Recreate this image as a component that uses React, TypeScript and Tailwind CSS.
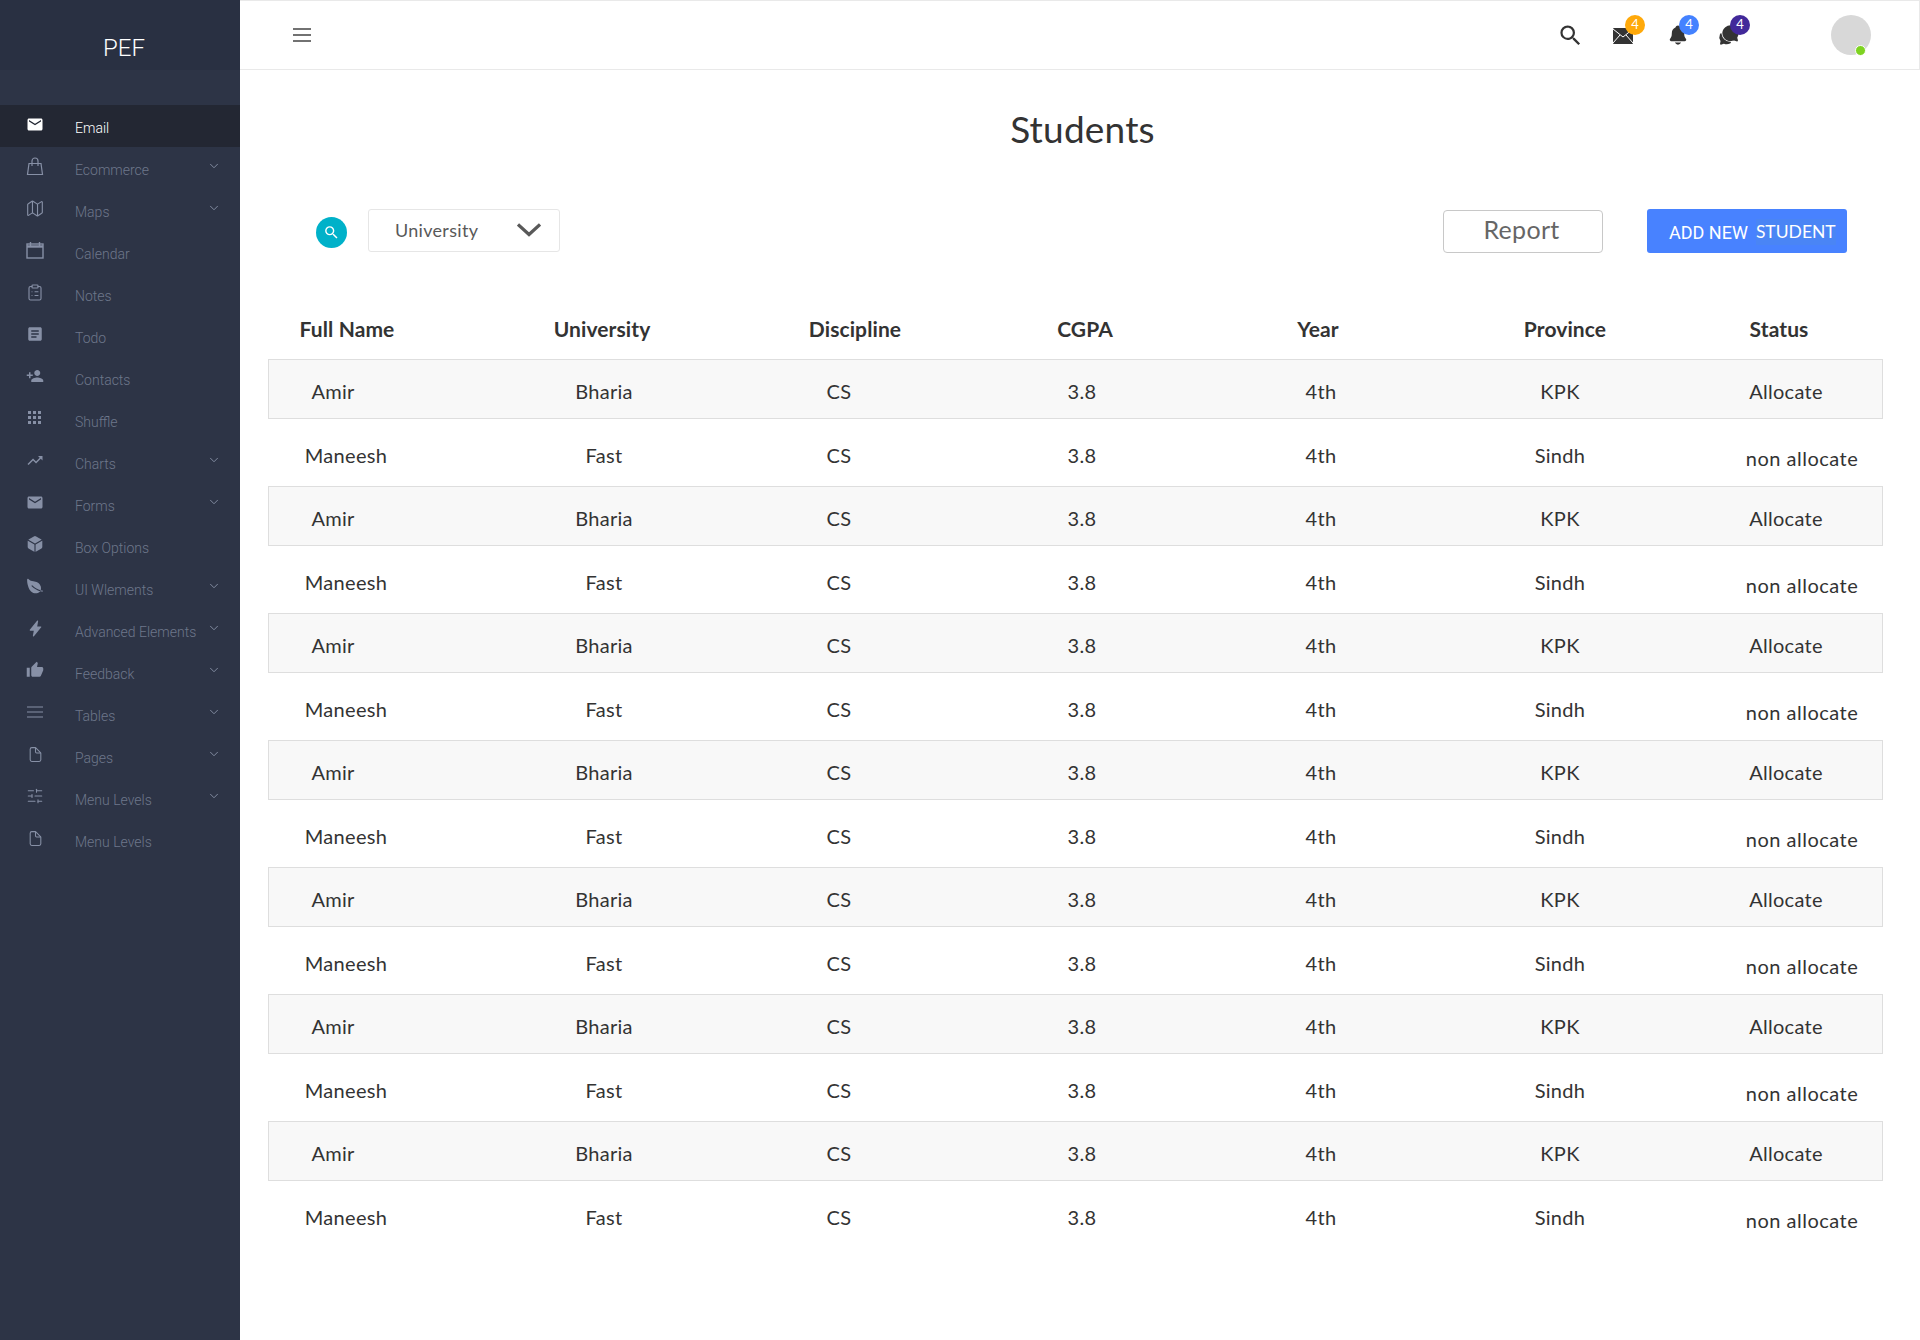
import React from "react";
import { MdEmail, MdArticle, MdPersonAdd, MdTrendingUp, MdThumbUp, MdSearch } from "react-icons/md";
import { IoMapOutline, IoCube, IoLeaf, IoFlash, IoDocumentOutline, IoNotifications, IoChatbubbles } from "react-icons/io5";
import { ClipboardList, SlidersHorizontal, ChevronDown } from "lucide-react";

const Bag = () => (
  <svg width="18" height="20" viewBox="0 0 18 20" fill="none" stroke="currentColor" strokeWidth="1.2">
    <path d="M3 7.5h12l1.5 11h-15z" />
    <path d="M6 10V5a3 3 0 0 1 6 0v5" />
  </svg>
);
const Cal = () => (
  <svg width="18" height="18" viewBox="0 0 18 18" fill="none" stroke="currentColor" strokeWidth="1.4">
    <rect x="1" y="3" width="16" height="14" />
    <path d="M1 5.5h16" strokeWidth="2.4" />
    <path d="M4.5 1v4M13.5 1v4" />
  </svg>
);
const Dots = () => (
  <svg width="14" height="14" viewBox="0 0 14 14" fill="currentColor">
    {[0, 5, 10].map((y) => [0, 5, 10].map((x) => <rect key={`${x}-${y}`} x={x} y={y} width="3" height="3" />))}
  </svg>
);
const Lines = () => (
  <svg width="16" height="12" viewBox="0 0 16 12" stroke="currentColor" strokeWidth="1.2">
    <path d="M0 1h16M0 6h16M0 11h16" />
  </svg>
);

const nav = [
  { label: "Email", icon: <MdEmail size={21} />, active: true },
  { label: "Ecommerce", icon: <Bag />, more: true },
  { label: "Maps", icon: <IoMapOutline size={21} />, more: true },
  { label: "Calendar", icon: <Cal /> },
  { label: "Notes", icon: <ClipboardList size={19} strokeWidth={1.5} /> },
  { label: "Todo", icon: <MdArticle size={20} /> },
  { label: "Contacts", icon: <MdPersonAdd size={22} /> },
  { label: "Shuffle", icon: <Dots /> },
  { label: "Charts", icon: <MdTrendingUp size={21} />, more: true },
  { label: "Forms", icon: <MdEmail size={21} />, more: true },
  { label: "Box Options", icon: <IoCube size={18} /> },
  { label: "UI Wlements", icon: <IoLeaf size={18} />, more: true },
  { label: "Advanced Elements", icon: <IoFlash size={17} />, more: true },
  { label: "Feedback", icon: <MdThumbUp size={18} />, more: true },
  { label: "Tables", icon: <Lines />, more: true },
  { label: "Pages", icon: <IoDocumentOutline size={17} />, more: true },
  { label: "Menu Levels", icon: <SlidersHorizontal size={18} strokeWidth={1.4} />, more: true },
  { label: "Menu Levels", icon: <IoDocumentOutline size={17} /> },
];

const MailIcon = () => (
  <svg width="20" height="16" viewBox="0 0 20 16">
    <rect x="0" y="0" width="20" height="16" rx="1" fill="#333" />
    <path d="M0 1l10 8 10-8M0 15l7-8M20 15l-7-8" stroke="#fff" strokeWidth="1" fill="none" />
  </svg>
);

const Badge = ({ color }: { color: string }) => (
  <span className={`absolute left-[12px] flex h-[20px] w-[20px] items-center justify-center rounded-full text-[13px] text-white ${color}`}>4</span>
);

const AmirRow = () => (
  <div className="mb-[1px] grid h-[60px] grid-cols-[271px_235px_243px_239px_239px_226px_120px] items-center border border-[#dedede] bg-[#f8f8f8] pt-[3px] pl-[4px]">
    {["Amir", "Bharia", "CS", "3.8", "4th", "KPK", "Allocate"].map((t) => (
      <div key={t} className="w-[120px] text-center">{t}</div>
    ))}
  </div>
);
const ManeeshRow = () => (
  <div className="grid h-[66px] grid-cols-[258px_235px_243px_239px_239px_242px_120px] items-center pt-[3px] pl-[18px]">
    {["Maneesh", "Fast", "CS", "3.8", "4th", "Sindh"].map((t) => (
      <div key={t} className="w-[120px] text-center">{t}</div>
    ))}
    <div className="mt-[6px] w-[120px] text-center tracking-[0.5px] whitespace-nowrap">non allocate</div>
  </div>
);

export default function App() {
  return (
    <div className="flex h-[1340px] overflow-hidden bg-white font-['Lato',sans-serif] text-[#333]">
      <aside className="w-[240px] shrink-0 bg-[#2d3446] font-['Roboto',sans-serif] text-[14px] font-light">
        <div className="flex h-[70px] items-center justify-center bg-[#293042] pt-[26px] pl-[8px] text-[24px] text-white">PEF</div>
        <nav className="pt-[35px]">
          {nav.map((n, i) => (
            <div key={i} className={`flex h-[42px] items-center pl-[26px] ${n.active ? "bg-[#232733] text-white" : "text-[#6e778b]"}`}>
              <span className={`mb-[4px] flex w-[18px] justify-center ${n.active ? "text-white" : "text-[#8790a6]"}`}>{n.icon}</span>
              <span className="mt-[4px] ml-[31px] flex-1 whitespace-nowrap">{n.label}</span>
              {n.more && <ChevronDown size={14} strokeWidth={1.6} className="mr-[19px] mb-[4px] text-[#8790a6]" />}
            </div>
          ))}
        </nav>
      </aside>

      <main className="min-w-0 flex-1">
        <header className="flex h-[70px] items-center border-y border-r border-[#e9e9e9] pr-[48px] pl-[52px]">
          <svg width="20" height="14" viewBox="0 0 20 14" stroke="#444" strokeWidth="1.6"><path d="M1 1h18M1 7h18M1 13h18" /></svg>
          <div className="ml-auto flex items-center">
            <MdSearch size={27} className="mr-[29px] text-[#333]" />
            <div className="relative mt-[2px] mr-[34px] [&>span]:-top-[13px]"><MailIcon /><Badge color="bg-[#ffa90a]" /></div>
            <div className="relative mr-[29px] [&>span]:-top-[9px]"><IoNotifications size={22} color="#333" /><Badge color="bg-[#4482ff]" /></div>
            <div className="relative mr-[91px] [&>span]:-top-[9px]"><IoChatbubbles size={22} color="#333" /><Badge color="bg-[#42299a]" /></div>
            <div className="relative h-[40px] w-[40px] rounded-full bg-[#d8d8d8]">
              <span className="absolute right-[5px] bottom-[-1px] h-[11px] w-[11px] rounded-full border border-white bg-[#7ed321]" />
            </div>
          </div>
        </header>

        <h1 className="mt-[35px] pl-[5px] text-center text-[37px] leading-[48px] font-normal tracking-[0.2px]">Students</h1>

        <div className="mt-[56px] flex h-[44px] items-center pr-[73px] pl-[76px] tracking-[0.3px]">
          <div className="mt-[2px] flex h-[31px] w-[31px] items-center justify-center rounded-full bg-[#00b1c9]">
            <MdSearch size={17} color="#fff" />
          </div>
          <div className="mb-[2px] ml-[21px] flex h-[43px] w-[192px] items-center rounded-[3px] border border-[#e6e6e6] pr-[18px] pl-[26px] text-[18px] text-[#595959]">
            University
            <svg className="ml-auto" width="24" height="14" viewBox="0 0 24 14" fill="none" stroke="#595959" strokeWidth="3.2"><path d="M1 1.5l11 10 11-10" /></svg>
          </div>
          <button className="ml-auto flex h-[43px] w-[160px] items-center justify-center rounded-[4px] border border-[#c8c8c8] pr-[3px] pb-[2px] text-[25px] text-[#666]">Report</button>
          <button className="ml-[44px] flex h-[44px] w-[200px] items-center rounded-[3px] bg-[#4882ff] pt-[2px] pl-[22px] text-[18px] tracking-normal text-white">
            <span className="font-['Roboto',sans-serif]">ADD NEW</span><span className="ml-[8px] bg-[#4a85f5] text-[17.5px]">STUDENT</span>
          </button>
        </div>

        <div className="mt-[46px] grid h-[60px] grid-cols-[255px_253px_230px_233px_247px_214px_120px] items-center pl-[47px] text-[21px] font-bold tracking-[0.1px]">
          {["Full Name", "University", "Discipline", "CGPA", "Year", "Province", "Status"].map((t) => (
            <div key={t} className="w-[120px] text-center whitespace-nowrap">{t}</div>
          ))}
        </div>

        <div className="mr-[37px] ml-[28px] text-[20px] tracking-[0.3px]">
          {[0, 1, 2, 3, 4, 5, 6].map((i) => (
            <React.Fragment key={i}>
              <AmirRow />
              <ManeeshRow />
            </React.Fragment>
          ))}
        </div>
      </main>
    </div>
  );
}
